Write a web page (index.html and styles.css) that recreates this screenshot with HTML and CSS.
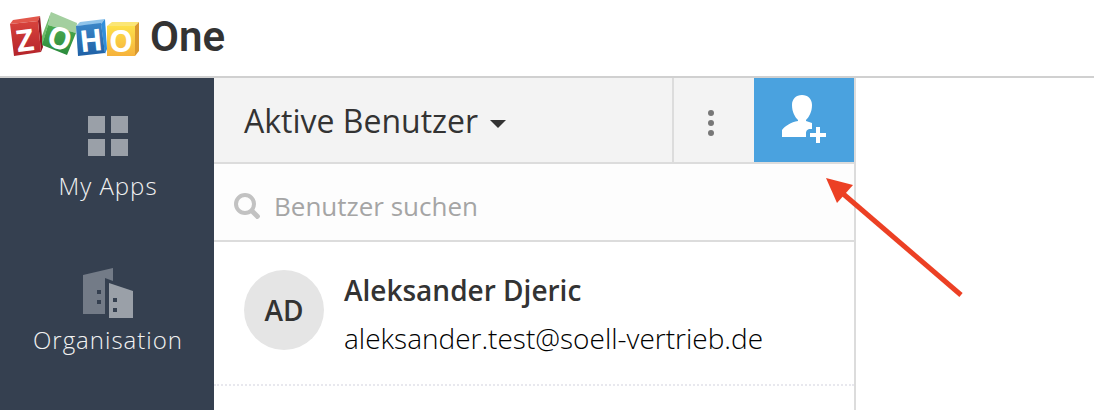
FILE: index.html
```html
<!DOCTYPE html>
<html lang="de">
<head>
    <meta charset="UTF-8">
    <meta name="viewport" content="width=device-width, initial-scale=1.0">
    <title>Zoho One</title>
    <link rel="stylesheet" href="styles.css">
</head>
<body>
    <header class="topbar">
        <a href="#" class="brand">
            <svg class="cubes" width="130" height="54" viewBox="0 0 130 54" role="img" aria-label="Zoho">
                <defs>
                    <linearGradient id="red" x1="0" y1="0" x2="0" y2="1"><stop offset="0" stop-color="#d8433c"/><stop offset="1" stop-color="#b4242b"/></linearGradient>
                    <linearGradient id="green" x1="0" y1="0" x2="0" y2="1"><stop offset="0" stop-color="#4dab50"/><stop offset="1" stop-color="#2a8a3c"/></linearGradient>
                    <linearGradient id="blue" x1="0" y1="0" x2="0" y2="1"><stop offset="0" stop-color="#3b86c8"/><stop offset="1" stop-color="#1f61a6"/></linearGradient>
                    <linearGradient id="yellow" x1="0" y1="0" x2="0" y2="1"><stop offset="0" stop-color="#fde04a"/><stop offset="1" stop-color="#f6b23c"/></linearGradient>
                </defs>
                <!-- Z -->
                <path d="M0 12 3 8 30 4 28 9Z" fill="#e2574b"/>
                <path d="M28 9 30 4 33 35 31 40Z" fill="#8f1620"/>
                <path d="M0 12 28 9 31 40 4 44Z" fill="url(#red)"/>
                <text x="15" y="39" transform="rotate(-7 15 28)">Z</text>
                <!-- O -->
                <path d="M38 13 41 0 67 11 66 21Z" fill="#a3cf9f"/>
                <path d="M32 34 38 13 41 0 32 24Z" fill="#6fbb6b"/>
                <path d="M38 13 66 21 57 43 32 33Z" fill="url(#green)"/>
                <text x="50" y="37" transform="rotate(17 50 26)">O</text>
                <!-- H -->
                <path d="M66 14 70 10 95 7 91 12Z" fill="#8fc3ea"/>
                <path d="M91 12 95 7 97 37 95 42Z" fill="#318fdb"/>
                <path d="M66 14 91 11 95 41 68 44Z" fill="url(#blue)"/>
                <text x="81" y="39" transform="rotate(-6 81 28)">H</text>
                <!-- O -->
                <path d="M97 14 102 10 129 10 125 14Z" fill="#fbe675"/>
                <path d="M125 14 129 10 129 39 125 44Z" fill="#d9982f"/>
                <path d="M97 14H125V44H97Z" fill="url(#yellow)"/>
                <text x="111" y="40">O</text>
            </svg>
            <span class="brand-name">One</span>
        </a>
    </header>
    <div class="wrap">
        <nav class="sidebar">
            <a href="#" class="nav-item">
                <svg width="40" height="40" viewBox="0 0 40 40" fill="#9aa0a8" aria-hidden="true">
                    <path d="M0 0h17v17H0zM23 0h17v17H23zM0 23h17v17H0zM23 23h17v17H23z"/>
                </svg>
                <span>My Apps</span>
            </a>
            <a href="#" class="nav-item org">
                <svg width="50" height="50" viewBox="0 0 50 50" aria-hidden="true">
                    <path fill="#737b87" fill-rule="evenodd" d="M0 7 30 0V13L22 10V46H0ZM14 22v4h4v-4zM14 32v4h4v-4z"/>
                    <path fill="#9aa0a8" fill-rule="evenodd" d="M26 15 50 23V50H26ZM30 30v4h4v-4zM30 40v4h4v-4z"/>
                </svg>
                <span>Organisation</span>
            </a>
        </nav>
        <main class="panel">
            <div class="panel-head">
                <button type="button" class="filter">
                    Aktive Benutzer
                    <svg width="16" height="16" viewBox="0 0 16 16" aria-hidden="true"><path d="M0 8H16L8 16Z" fill="#333"/></svg>
                </button>
                <button type="button" class="more" aria-label="Mehr">
                    <svg width="6" height="26" viewBox="0 0 6 26" fill="#777" aria-hidden="true">
                        <circle cx="3" cy="3" r="3"/><circle cx="3" cy="13" r="3"/><circle cx="3" cy="23" r="3"/>
                    </svg>
                </button>
                <button type="button" class="add" aria-label="Benutzer hinzufügen">
                    <svg width="44" height="48" viewBox="0 0 44 48" fill="#fff" aria-hidden="true">
                        <path d="M20 0C26 0 30 4 30 10C30 17 27 22 24 25V26L30 28V34H27Q24 35 24 38V42H0V35C3 31 9 27 16 26V25C13 22 10 17 10 10C10 4 14 0 20 0Z"/>
                        <path d="M34 32h4v6h6v4h-6v6h-4v-6h-6v-4h6z"/>
                    </svg>
                </button>
            </div>
            <div class="search">
                <label for="search" aria-label="Benutzer suchen">
                    <svg width="26" height="26" viewBox="0 0 26 26" fill="none" stroke="#c2c2c2" aria-hidden="true">
                        <circle cx="11" cy="11" r="9" stroke-width="4"/>
                        <path d="M18 18 25 25" stroke-width="5"/>
                    </svg>
                </label>
                <input type="text" id="search" placeholder="Benutzer suchen">
            </div>
            <div class="user">
                <div class="avatar">AD</div>
                <div class="info">
                    <div class="name">Aleksander Djeric</div>
                    <div class="mail">aleksander.test@soell-vertrieb.de</div>
                </div>
            </div>
            <!-- pointer to the add button -->
            <svg class="arrow" width="140" height="122" viewBox="0 0 140 122" fill="#ec4024" aria-hidden="true">
                <path d="M0 0 27 7 11 25Z"/>
                <path d="M15 14 135 117" stroke="#ec4024" stroke-width="5"/>
            </svg>
        </main>
    </div>
</body>
</html>
```
FILE: styles.css
```css
* {
    box-sizing: border-box;
}
body {
    margin: 0;
    min-height: 100vh;
    display: flex;
    flex-direction: column;
    font-family: "Open Sans", "Noto Sans", sans-serif;
    color: #333;
    background-color: #fff;
}
button {
    border: 0;
    padding: 0;
    font: inherit;
    color: inherit;
    background: none;
    cursor: pointer;
}
svg {
    display: block;
    flex: none;
}
.topbar {
    height: 78px;
    padding: 12px 10px;
    border-bottom: 2px solid #d0d0d0;
}
.brand {
    display: inline-flex;
    gap: 10px;
    color: #333;
    text-decoration: none;
}
.cubes {
    overflow: visible;
}
.cubes text {
    font: bold 30px "Open Sans", sans-serif;
    text-anchor: middle;
    fill: #fff;
}
.brand-name {
    font: 600 42px/50px Roboto, "Liberation Sans", sans-serif;
}
.wrap {
    flex: 1;
    display: flex;
}
.sidebar {
    width: 214px;
    padding-top: 38px;
    padding-left: 2px;
    background-color: #354050;
}
.nav-item {
    display: flex;
    flex-direction: column;
    align-items: center;
    gap: 14px;
    font-size: 24px;
    font-weight: 300;
    line-height: 32px;
    letter-spacing: 1px;
    color: #f2f2f2;
    text-decoration: none;
}
.org {
    margin-top: 66px;
    gap: 6px;
}
.panel {
    position: relative;
    width: 642px;
    border-right: 2px solid #dcdcdc;
}
.panel-head {
    display: flex;
    height: 86px;
    border-bottom: 2px solid #dcdcdc;
    background-color: #f3f3f3;
}
.filter {
    flex: 1;
    display: flex;
    align-items: center;
    gap: 12px;
    padding-left: 30px;
    font-size: 32px;
}
.more {
    width: 82px;
    display: flex;
    align-items: center;
    justify-content: center;
    padding-top: 6px;
    padding-right: 6px;
    border-left: 2px solid #dcdcdc;
}
.add {
    width: 100px;
    display: flex;
    justify-content: center;
    align-items: center;
    padding-bottom: 2px;
    background-color: #4aa2df;
}
.search {
    display: flex;
    align-items: center;
    gap: 14px;
    height: 78px;
    padding: 8px 20px 0;
    border-bottom: 2px solid #dcdcdc;
    background-color: #fdfdfd;
}
.search input {
    flex: 1;
    border: 0;
    padding: 0;
    font: 26px "Open Sans", "Noto Sans", sans-serif;
    background: none;
    outline: none;
}
.search input::placeholder {
    color: #a5a5a5;
}
.user {
    display: flex;
    gap: 20px;
    height: 144px;
    padding: 28px 30px;
    border-bottom: 2px dotted #e8e8ee;
}
.avatar {
    width: 80px;
    height: 80px;
    border-radius: 50%;
    background-color: #e5e5e5;
    font-size: 28px;
    font-weight: 600;
    line-height: 80px;
    text-align: center;
}
.name {
    font-size: 28px;
    font-weight: 600;
    line-height: 40px;
}
.mail {
    margin-top: 6px;
    font-size: 28px;
    font-weight: 300;
    line-height: 44px;
    color: #000;
}
.arrow {
    position: absolute;
    left: 612px;
    top: 100px;
}
```
